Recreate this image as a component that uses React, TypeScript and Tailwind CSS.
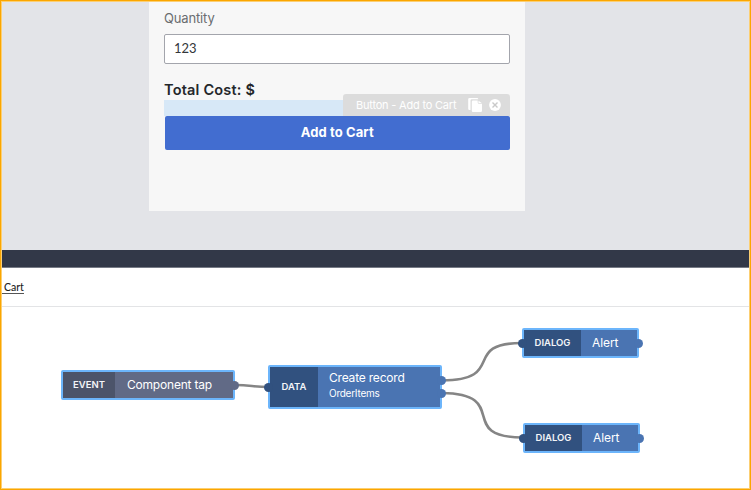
import type { CSSProperties, ReactNode } from "react";

type Port = { side: "left" | "right"; y: number };

type FlowNodeProps = {
  frame: CSSProperties;
  tag: string;
  tagWidth: number;
  tone: "event" | "data";
  ports: Port[];
  children: ReactNode;
};

function FlowNode({ frame, tag, tagWidth, tone, ports, children }: FlowNodeProps) {
  const dark = tone === "event" ? "bg-[#4c546a]" : "bg-[#31517f]";
  const light = tone === "event" ? "bg-[#616a86]" : "bg-[#4a74b2]";
  return (
    <div className="absolute rounded-[2px] border-2 border-[#6cb5fb] flex" style={frame}>
      <div
        className={`${dark} flex shrink-0 items-center justify-center text-[9.5px] font-semibold text-[#f3f5f8]`}
        style={{ width: tagWidth }}
      >
        {tag}
      </div>
      <div className={`${light} flex flex-1 flex-col justify-center pl-3 text-white whitespace-nowrap`}>{children}</div>
      {ports.map((p) => (
        <span
          key={`${p.side}${p.y}`}
          className={`absolute size-[9px] rounded-full ${p.side === "left" ? `${dark} -left-[6px]` : `${light} -right-[6px]`}`}
          style={{ top: p.y }}
        />
      ))}
    </div>
  );
}

function CopyIcon() {
  return (
    <svg width="14" height="14" viewBox="0 0 14 14" fill="none">
      <path d="M1.5 0H9a1.3 1.3 0 0 1 1.3 1.3H3.8a1.3 1.3 0 0 0-1.3 1.3V12H1.5A1.3 1.3 0 0 1 .2 10.7V1.3A1.3 1.3 0 0 1 1.5 0Z" fill="white" />
      <path d="M5 2.6h4.7v2a1.2 1.2 0 0 0 1.2 1.2H14V12.700a1.2 1.2 0 0 1-1.2 1.2H5a1.2 1.2 0 0 1-1.200-1.200V3.800A1.2 1.2 0 0 1 5 2.600Z" fill="white" />
      <path d="M10.5 2.8 13.700 5h-3.200Z" fill="white" />
    </svg>
  );
}

function CloseIcon() {
  return (
    <svg width="12" height="12" viewBox="0 0 12 12">
      <circle cx="6" cy="6" r="5.9" fill="white" />
      <path d="m3.5 3.5 5 5m0-5-5 5" stroke="#c9c9c9" strokeWidth="1.4" />
    </svg>
  );
}

export default function App() {
  return (
    <div className="relative flex h-[490px] w-[751px] flex-col overflow-hidden bg-white font-['Inter',sans-serif]">
      <section className="h-[250px] shrink-0 bg-[#e3e4e8] pl-[149px]">
        <div className="h-[211px] w-[376px] bg-[#f7f7f7] pl-[15px] pt-[9px]">
          <div className="h-[25px] text-[13px] leading-[18px] tracking-[-0.15px] text-[#6a6d70]">Quantity</div>
          <div className="flex h-[30px] w-[346px] items-center rounded-[2px] border border-[#a3a5ac] bg-white pl-[9px] font-['Lato',sans-serif] text-[13px] text-[#32363a]">
            123
          </div>
          <div className="mt-[16px] h-[13px] whitespace-nowrap text-[14.5px] font-semibold leading-[19px] tracking-[0.2px] text-[#24272b]">
            Total Cost: $
          </div>
          <div className="flex h-[23px] w-[346px] items-end">
            <div className="h-4 flex-1 bg-[#d7e8f7]" />
            <div className="relative z-10 flex h-[22px] w-[167px] items-center rounded-t-[3px] bg-[#dcdcdc] pl-[13px] text-[11px] text-white">
              <span className="w-[112px] whitespace-nowrap tracking-[-0.2px]">Button - Add to Cart</span>
              <CopyIcon />
              <span className="ml-[7px]">
                <CloseIcon />
              </span>
            </div>
          </div>
          <div className="ml-[1px] flex h-[33.5px] w-[344.5px] items-center justify-center rounded-[2px] bg-[#426dd0] text-[13px] font-bold tracking-[0.1px] text-white">
            Add to Cart
          </div>
        </div>
      </section>

      <div className="h-[18px] shrink-0 border-b border-[#777b86] bg-[#323848]" />

      <nav className="h-[39px] shrink-0 border-b border-[#e3e4e6] pl-1 pt-[11px] font-['Lato',sans-serif] text-[10.5px] font-medium leading-[16px] text-[#222]">
        <a className="-ml-1 border-b border-[#555] pl-1">Cart</a>
      </nav>

      <main className="relative h-[183px] shrink-0">
        <svg className="absolute inset-0" width="751" height="183" viewBox="0 307 751 183" fill="none" stroke="#858585" strokeWidth="2.6">
          <path d="M236 385C250 385 254 387 268 387" />
          <path d="M442 380.5C508 380 460 343 522 343" />
          <path d="M442 393C512 394 455 437.5 523 437.5" />
        </svg>
        <FlowNode frame={{ left: 61, top: 63, width: 174, height: 30 }} tag="EVENT" tagWidth={52} tone="event" ports={[{ side: "right", y: 8.5 }]}>
          <span className="text-[12px] leading-4 tracking-[-0.2px]">Component tap</span>
        </FlowNode>
        <FlowNode
          frame={{ left: 268, top: 58, width: 174, height: 44 }}
          tag="DATA"
          tagWidth={48}
          tone="data"
          ports={[{ side: "left", y: 15.5 }, { side: "right", y: 9 }, { side: "right", y: 21.5 }]}
        >
          <span className="-ml-px text-[12px] leading-[16px] tracking-[-0.2px]">Create record</span>
          <span className="-ml-px pb-[4px] text-[10px] leading-[14px] tracking-[-0.25px]">OrderItems</span>
        </FlowNode>
        <FlowNode frame={{ left: 522, top: 21, width: 117, height: 30 }} tag="DIALOG" tagWidth={57} tone="data" ports={[{ side: "left", y: 8.5 }, { side: "right", y: 8.5 }]}>
          <span className="-ml-px text-[12px] leading-4 tracking-[-0.1px]">Alert</span>
        </FlowNode>
        <FlowNode frame={{ left: 523, top: 116, width: 117, height: 30 }} tag="DIALOG" tagWidth={57} tone="data" ports={[{ side: "left", y: 8.5 }, { side: "right", y: 8.5 }]}>
          <span className="-ml-px text-[12px] leading-4 tracking-[-0.1px]">Alert</span>
        </FlowNode>
      </main>

      <div className="pointer-events-none absolute inset-0 border border-[#fba600]">
        <div className="size-full border border-[#fccf73]" />
      </div>
    </div>
  );
}
